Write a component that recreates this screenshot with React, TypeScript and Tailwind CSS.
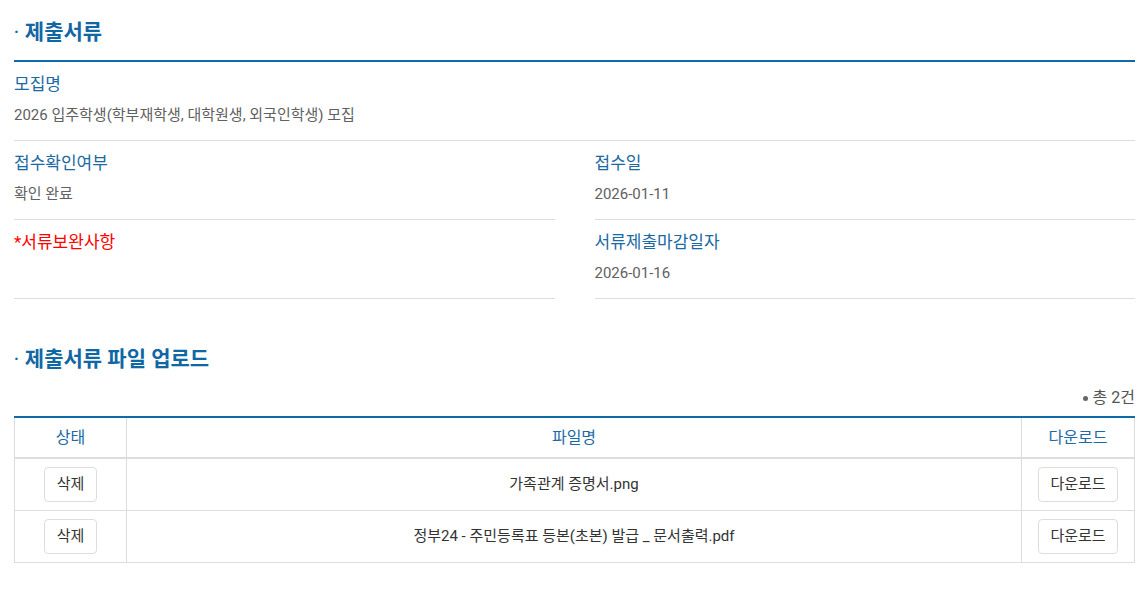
const font = { fontFamily: "Roboto, 'Noto Sans CJK KR', sans-serif" };

type Field = { label: string; value: string; required?: boolean };

const FieldBlock = ({ field }: { field: Field }) => (
  <div className="flex flex-col border-b border-[#dddddd] pt-[11px] pb-[15px]">
    <span
      className={`h-[22px] text-[17px] leading-[22px] ${field.required ? 'text-[#ff0000]' : 'text-[#1b6aa3]'}`}
    >
      {field.required && '*'}
      {field.label}
    </span>
    <span className="mt-[10px] h-[20px] text-[15px] leading-[20px] text-[#616161]">{field.value}</span>
  </div>
);

const SectionTitle = ({ children }: { children: React.ReactNode }) => (
  <h2 className="flex items-center text-[21px] font-bold leading-[28px] text-[#0f67a4]">
    <span className="mr-[6px] text-[16px]">·</span>
    {children}
  </h2>
);

const files = ['가족관계 증명서.png', '정부24 - 주민등록표 등본(초본) 발급 _ 문서출력.pdf'];

export default function App() {
  return (
    <div className="min-h-[605px] bg-white pl-[14px] pr-[12px] text-[#333333]" style={font}>
      <div className="pt-[18px]">
        <SectionTitle>제출서류</SectionTitle>
      </div>
      <div className="mt-[14px] border-t-2 border-[#0f6aa8]">
        <FieldBlock field={{ label: '모집명', value: '2026 입주학생(학부재학생, 대학원생, 외국인학생) 모집' }} />
        <div className="grid grid-cols-2 gap-x-[40px]">
          <FieldBlock field={{ label: '접수확인여부', value: '확인 완료' }} />
          <FieldBlock field={{ label: '접수일', value: '2026-01-11' }} />
          <FieldBlock field={{ label: '서류보완사항', value: '', required: true }} />
          <FieldBlock field={{ label: '서류제출마감일자', value: '2026-01-16' }} />
        </div>
      </div>

      <div className="mt-[46px]">
        <SectionTitle>제출서류 파일 업로드</SectionTitle>
      </div>
      <div className="mt-[15px] flex items-center justify-end text-[16px] leading-[20px] text-[#555555]">
        <span className="mr-[5px] h-[5px] w-[5px] rounded-full bg-[#666666]" />
        <span>총 2건</span>
      </div>
      <table className="mt-[8px] w-full border-collapse border-t-2 border-[#0f6aa8] text-[15px]">
        <thead>
          <tr className="h-[41px] border-b-2 border-[#dddddd]">
            <th className="w-[112px] border-x border-[#dddddd] text-[16px] font-normal text-[#1b6aa3]">상태</th>
            <th className="border-x border-[#dddddd] text-[16px] font-normal text-[#1b6aa3]">파일명</th>
            <th className="w-[113px] border-x border-[#dddddd] text-[16px] font-normal text-[#1b6aa3]">다운로드</th>
          </tr>
        </thead>
        <tbody>
          {files.map((name) => (
            <tr key={name} className="h-[52px] border-b border-[#dddddd]">
              <td className="border-x border-[#dddddd] text-center">
                <button className="h-[35px] w-[53px] rounded-[4px] border border-[#dddddd] bg-white text-[15px] text-[#333333]">
                  삭제
                </button>
              </td>
              <td className="border-x border-[#dddddd] text-center text-[#333333]">{name}</td>
              <td className="border-x border-[#dddddd] text-center">
                <button className="h-[35px] w-[80px] rounded-[4px] border border-[#dddddd] bg-white text-[15px] text-[#333333]">
                  다운로드
                </button>
              </td>
            </tr>
          ))}
        </tbody>
      </table>
    </div>
  );
}
